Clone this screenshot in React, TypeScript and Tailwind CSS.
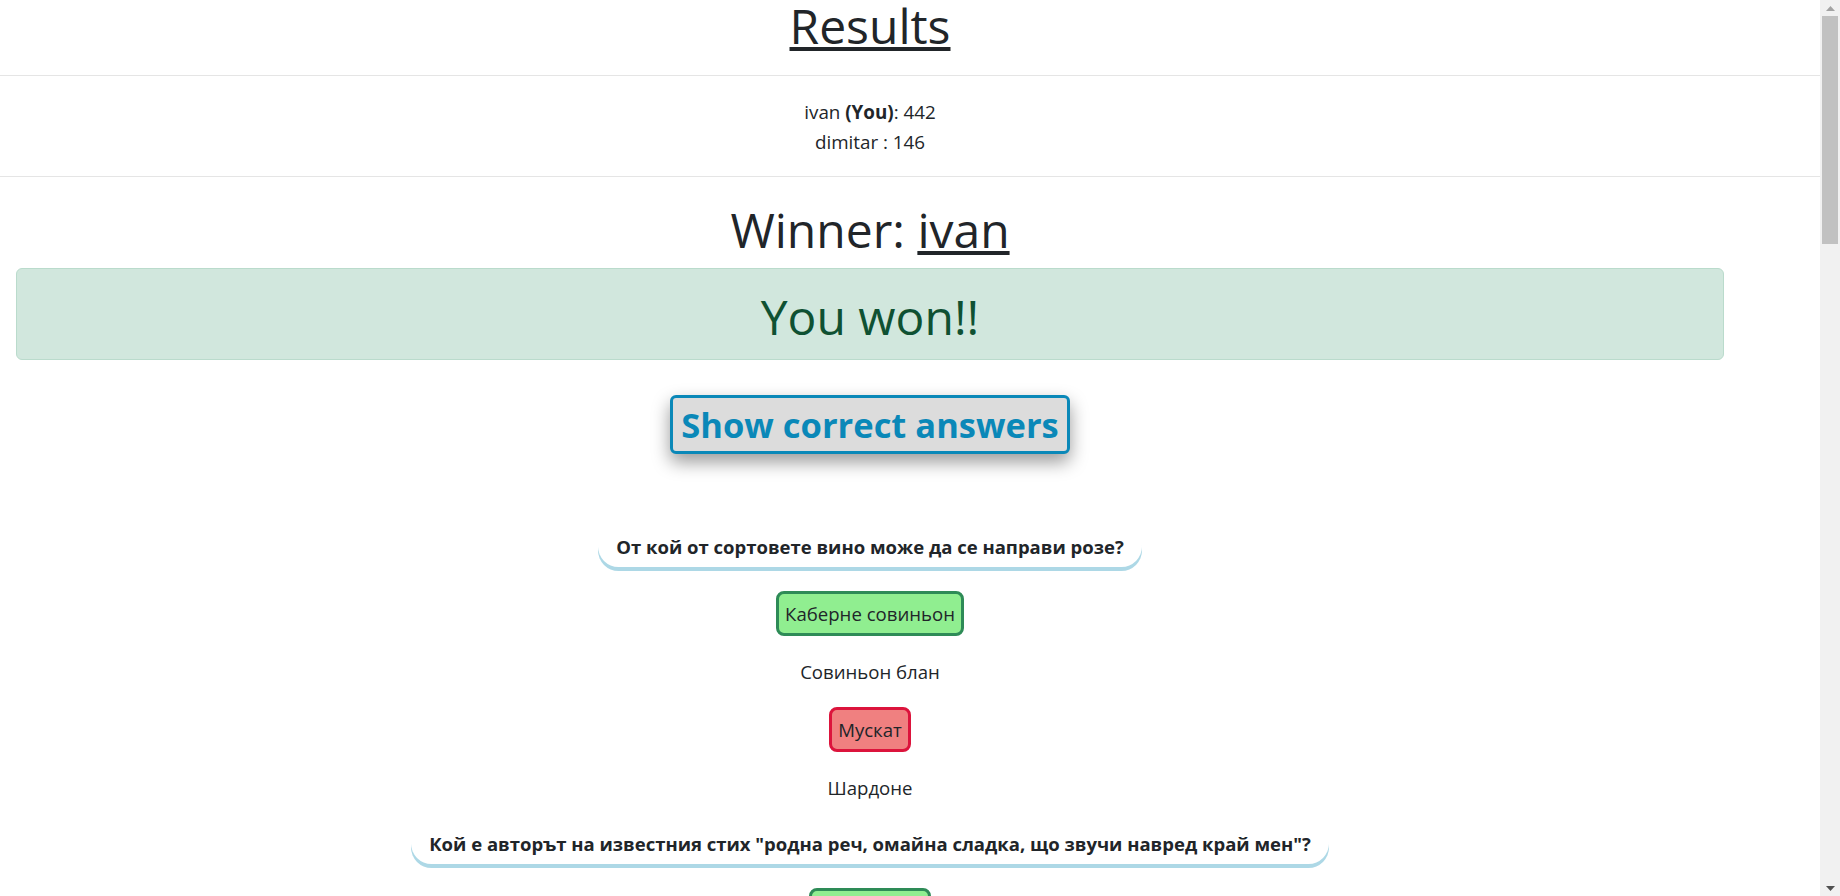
import React from "react";

type Answer = { text: string; state?: "correct" | "wrong" };
type Question = { title: string; answers: Answer[] };

const players = [
  { name: "ivan", you: true, score: 442 },
  { name: "dimitar", you: false, score: 146 },
];

const questions: Question[] = [
  {
    title: "От кой от сортовете вино може да се направи розе?",
    answers: [
      { text: "Каберне совиньон", state: "correct" },
      { text: "Совиньон блан" },
      { text: "Мускат", state: "wrong" },
      { text: "Шардоне" },
    ],
  },
  {
    title: 'Кой е авторът на известния стих "родна реч, омайна сладка, що звучи навред край мен"?',
    answers: [
      { text: "Иван Вазов", state: "correct" },
      { text: "Христо Ботев" },
      { text: "Пейо Яворов" },
      { text: "Христо Смирненски" },
    ],
  },
  {
    title: "Коя е най-високата планина в България?",
    answers: [
      { text: "Рила", state: "correct" },
      { text: "Пирин" },
      { text: "Стара планина" },
      { text: "Родопи" },
    ],
  },
];

function AnswerItem({ answer }: { answer: Answer }) {
  let cls = "border-transparent";
  if (answer.state === "correct") cls = "bg-[#90ee90] border-[#2e8b57]";
  if (answer.state === "wrong") cls = "bg-[#f08080] border-[#dc143c]";
  return (
    <div className="mb-[13px]">
      <span className={`inline-block px-[6px] py-[5px] border-[3px] rounded-lg text-[18.6px] leading-[29px] ${cls}`}>
        {answer.text}
      </span>
    </div>
  );
}

function Scrollbar() {
  return (
    <div className="sticky top-0 self-start w-[20px] h-screen shrink-0 bg-[#f1f1f1] flex flex-col items-center">
      <div className="h-[16px] flex items-center justify-center">
        <svg width="9" height="5" viewBox="0 0 9 5">
          <path d="M4.5 0 L9 5 L0 5 Z" fill="#a3a3a3" />
        </svg>
      </div>
      <div className="w-[16px] h-[228px] bg-[#c1c1c1]" />
      <div className="flex-1" />
      <div className="h-[16px] flex items-center justify-center">
        <svg width="9" height="5" viewBox="0 0 9 5">
          <path d="M0 0 L9 0 L4.5 5 Z" fill="#505050" />
        </svg>
      </div>
    </div>
  );
}

export default function App() {
  return (
    <div className="flex bg-white text-[#212529] font-['Open_Sans',sans-serif]">
      <main className="flex-1 min-w-0">
        {/* Header */}
        <div className="w-[1740px] text-center">
          <h1 className="text-[48px] leading-[51px] font-medium underline">Results</h1>
        </div>
        <hr className="mt-[24px] border-t border-[#e5e5e5]" />
        <div className="w-[1740px] text-center pt-[21px] text-[18.8px] leading-[30px]">
          {players.map((p) => (
            <p key={p.name}>
              {p.name} {p.you && <b>(You)</b>}: {p.score}
            </p>
          ))}
        </div>
        <hr className="mt-[19px] border-t border-[#e5e5e5]" />

        <div className="w-[1740px] text-center">
          <h1 className="mt-[24px] text-[48px] leading-[58px] font-medium">
            Winner: <span className="underline">ivan</span>
          </h1>

          <div className="mx-4 mt-[9px] pt-[19px] pb-[13px] bg-[#d1e7dd] border border-[#badbcc] rounded-md text-[#0f5132]">
            <h1 className="text-[48px] leading-[58px] font-medium">You won!!</h1>
          </div>

          <button className="mt-[35px] px-[8px] py-[4px] bg-[#dcdcdc] border-[3px] border-[#0a88b8] rounded-md text-[#0a88b8] text-[34.5px] leading-[45px] font-bold shadow-[0_8px_18px_rgba(0,0,0,0.4)]">
            Show correct answers
          </button>

          {/* Questions */}
          <div className="mt-[72px]">
            {questions.map((q) => (
              <div key={q.title}>
                <div className="inline-block mb-[24px] px-[18px] py-[6px] rounded-[22px] shadow-[0_4px_0_#add8e6] font-bold text-[18.5px] leading-[29px]">
                  {q.title}
                </div>
                {q.answers.map((a) => (
                  <AnswerItem key={a.text} answer={a} />
                ))}
              </div>
            ))}
          </div>
        </div>
      </main>
      <Scrollbar />
    </div>
  );
}
